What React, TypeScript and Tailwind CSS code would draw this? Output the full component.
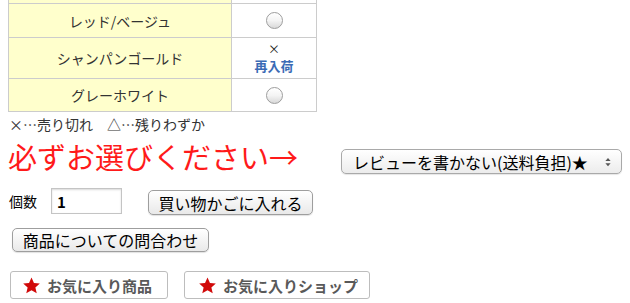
import { useState } from 'react';

const ROWS = [
  { name: 'レッド/ベージュ', stock: 'radio', h: 'h-[34px]' },
  { name: 'シャンパンゴールド', stock: 'sold', h: 'h-[41px]' },
  { name: 'グレーホワイト', stock: 'radio', h: 'h-[33px]' }];

const font = "font-['Noto_Sans_CJK_JP','Liberation_Sans',sans-serif]";

function Radio() {
  return (
    <span className="block w-[17px] h-[17px] rounded-full border border-[#9d9d9d] bg-gradient-to-b from-[#ffffff] via-[#f4f4f4] to-[#d9d9d9] shadow-[inset_0_1px_1px_rgba(255,255,255,0.9)]" />);

}

function Star() {
  return (
    <svg viewBox="0 0 24 24" className="w-[19px] h-[19px] shrink-0">
      <path d="M12 1.8l3.1 6.9 7.4.7-5.6 5 1.7 7.4L12 17.9l-6.6 3.9 1.7-7.4-5.6-5 7.4-.7z" fill="#d10a0a" />
    </svg>);

}

export default function App() {
  const [qty, setQty] = useState('1');

  return (
    <div className={`${font} w-[630px] h-[303px] overflow-hidden bg-white text-[#333]`}>
      {/* color table */}
      <div className="ml-2 w-[309px] border-x border-[#cccccc]">
        <div className="flex h-[4px] border-b border-[#cccccc]">
          <div className="w-[223px] bg-[#ffffcc] border-r border-[#cccccc]" />
          <div className="flex-1" />
        </div>
        {ROWS.map((r) =>
        <div key={r.name} className={`flex ${r.h} border-b border-[#cccccc]`}>
            <div className="w-[223px] bg-[#ffffcc] border-r border-[#cccccc] flex items-center justify-center text-[14px] leading-none text-[#333]">
              {r.name}
            </div>
            <div className="flex-1 flex flex-col items-center justify-center">
              {r.stock === 'radio' ?
            <Radio /> :

            <>
                  <span className="text-[12px] leading-[16px] text-[#222]">×</span>
                  <span className="text-[13px] leading-[18px] font-bold text-[#3a6bb5]">再入荷</span>
                </>
            }
            </div>
          </div>
        )}
      </div>

      <div className="pl-[9px] mt-[4px] text-[14px] leading-[16px] text-[#333]">
        ×…売り切れ　△…残りわずか
      </div>

      {/* must choose */}
      <div className="flex items-start mt-[8px]">
        <div className="pl-[8px] text-[29px] leading-[32px] text-[#ff1a1a]">必ずお選びください→</div>
        <div className="ml-auto mr-[8px] mt-[9px] w-[281px] h-[25px] rounded-[5px] border border-[#a9a9a9] bg-gradient-to-b from-[#ffffff] to-[#ececec] shadow-[0_1px_1px_rgba(0,0,0,0.1)] flex items-center pl-[11px] pr-[10px]">
          <span className="text-[16px] leading-none text-black">レビューを書かない(送料負担)★</span>
          <svg viewBox="0 0 8 12" className="ml-auto w-[6px] h-[10px]">
            <path d="M4 0.5L7.5 4.5H0.5z M4 11.5L7.5 7.5H0.5z" fill="#555" />
          </svg>
        </div>
      </div>

      {/* quantity */}
      <div className="flex items-start mt-[14px]">
        <span className="ml-[9px] mt-[5px] text-[14px] leading-[16px] text-black">個数</span>
        <input
          value={qty}
          onChange={(e) => setQty(e.target.value)}
          className="ml-[14px] w-[71px] h-[26px] border border-[#c4c4c4] shadow-[inset_0_1px_2px_rgba(0,0,0,0.15)] pl-[5px] text-[15px] font-bold text-black outline-none" />

        <button className="ml-[26px] mt-[2px] w-[165px] h-[25px] rounded-[5px] border border-[#9e9e9e] bg-gradient-to-b from-[#ffffff] to-[#e9e9e9] shadow-[0_1px_1px_rgba(0,0,0,0.12)] text-[16px] leading-none text-black">
          買い物かごに入れる
        </button>
      </div>

      <button className="block ml-[12px] mt-[13px] w-[197px] h-[24px] rounded-[5px] border border-[#9e9e9e] bg-gradient-to-b from-[#ffffff] to-[#e9e9e9] shadow-[0_1px_1px_rgba(0,0,0,0.12)] text-[16px] leading-none text-black">
        商品についての問合わせ
      </button>

      {/* favourites */}
      <div className="flex mt-[19px] ml-[10px] gap-[16px]">
        <button className="w-[158px] h-[28px] rounded-[3px] border border-[#bdbdbd] bg-white flex items-center pl-[11px] gap-[6px] text-[15px] leading-none font-bold text-[#595959]">
          <Star />お気に入り商品
        </button>
        <button className="w-[186px] h-[28px] rounded-[3px] border border-[#bdbdbd] bg-white flex items-center pl-[13px] gap-[6px] text-[15px] leading-none font-bold text-[#595959]">
          <Star />お気に入りショップ
        </button>
      </div>
    </div>);

}
